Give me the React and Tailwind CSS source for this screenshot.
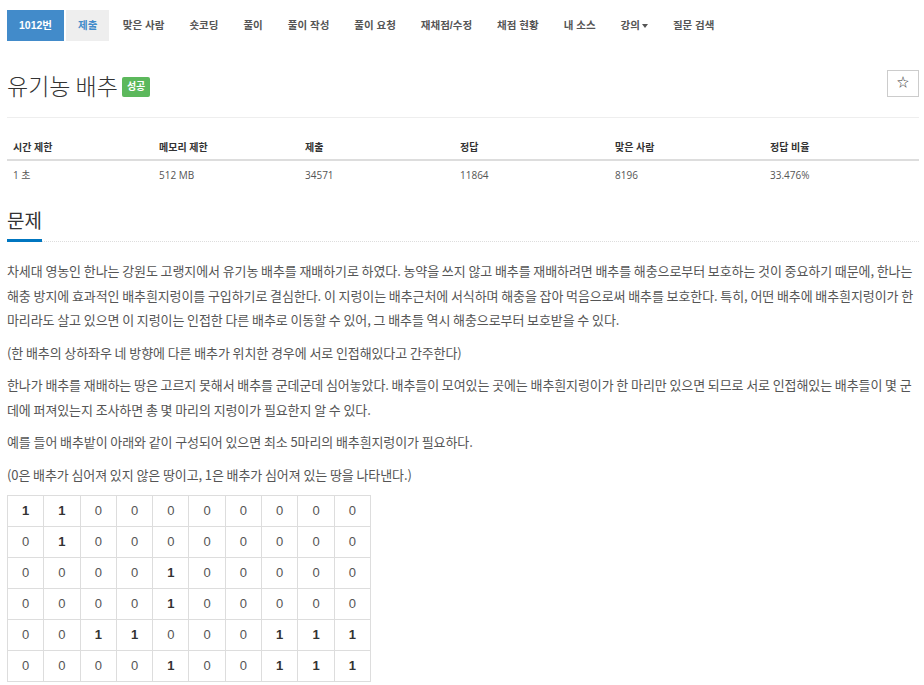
import React from "react";

const navItems = ["맞은 사람", "숏코딩", "풀이", "풀이 작성", "풀이 요청", "재채점/수정", "채점 현황", "내 소스"];

const stats = [
  ["시간 제한", "1 초", "w-[146px]"],
  ["메모리 제한", "512 MB", "w-[146px]"],
  ["제출", "34571", "w-[155px]"],
  ["정답", "11864", "w-[155px]"],
  ["맞은 사람", "8196", "w-[155px]"],
  ["정답 비율", "33.476%", ""],
];

const grid = [
  [1, 1, 0, 0, 0, 0, 0, 0, 0, 0],
  [0, 1, 0, 0, 0, 0, 0, 0, 0, 0],
  [0, 0, 0, 0, 1, 0, 0, 0, 0, 0],
  [0, 0, 0, 0, 1, 0, 0, 0, 0, 0],
  [0, 0, 1, 1, 0, 0, 0, 1, 1, 1],
  [0, 0, 0, 0, 1, 0, 0, 1, 1, 1],
];

const App = () => {
  return (
    <div className="min-h-[685px] bg-white pl-[7px] pr-[5px] pt-[10px] font-['Liberation_Sans','Noto_Sans_CJK_KR',sans-serif] text-[#555]">
      {/* Problem menu */}
      <ul className="flex gap-[2px] text-[10.5px] font-bold">
        <li className="flex h-[31px] items-center bg-[#428bca] px-[12px] text-white">1012번</li>
        <li className="flex h-[31px] items-center bg-[#eee] px-[12px] text-[#428bca]">제출</li>
        {navItems.map((item) => (
          <li key={item} className="flex h-[31px] items-center px-[11.5px]">
            {item}
          </li>
        ))}
        <li className="flex h-[31px] items-center px-[11.5px]">
          강의
          <span className="ml-[2px] inline-block h-0 w-0 border-x-[3px] border-t-[4px] border-x-transparent border-t-[#555]" />
        </li>
        <li className="flex h-[31px] items-center px-[11.5px]">질문 검색</li>
      </ul>

      {/* Title */}
      <div className="mt-[27px] flex items-center justify-between border-b border-[#eee] pb-[15px]">
        <div className="flex items-center gap-[4px]">
          <h1 className="font-['Noto_Sans_CJK_KR',sans-serif] text-[23px] font-light leading-[34px] text-[#333]">유기농 배추</h1>
          <span className="mt-[4px] rounded-[2px] bg-[#5cb85c] px-[5px] py-[2px] text-[10px] font-bold leading-[16px] text-white">성공</span>
        </div>
        <button className="mb-[4px] flex h-[27px] w-[32px] items-center justify-center border border-[#ccc] bg-white text-[12px] text-[#333]">
          ☆
        </button>
      </div>

      {/* Stats table */}
      <table className="mt-[19px] w-full table-fixed font-['Open_Sans','Noto_Sans_CJK_KR',sans-serif] text-[10px] text-[#333]">
        <thead>
          <tr className="border-b-2 border-[#ddd]">
            {stats.map(([h, , w]) => (
              <th key={h} className={`px-[6px] pb-[4px] pt-[3px] text-left font-bold ${w}`}>
                {h}
              </th>
            ))}
          </tr>
        </thead>
        <tbody>
          <tr>
            {stats.map(([h, v]) => (
              <td key={h} className="px-[6px] pb-[4px] pt-[7px] text-[#555]">
                {v}
              </td>
            ))}
          </tr>
        </tbody>
      </table>

      {/* Problem section */}
      <div className="mt-[20px] flex items-end border-b border-dotted border-[#ddd]">
        <h2 className="-mb-px border-b-[3px] border-[#0076c0] pb-[6px] font-['Noto_Sans_CJK_KR',sans-serif] text-[19px] leading-[26px] text-[#333]">
          문제
        </h2>
      </div>

      <div className="mt-[17px] font-['Noto_Sans_CJK_KR',sans-serif] text-[13px] leading-[24.5px] tracking-[-0.1px] text-[#555]">
        <p className="mb-[8px]">
          차세대 영농인 한나는 강원도 고랭지에서 유기농 배추를 재배하기로 하였다. 농약을 쓰지 않고 배추를 재배하려면 배추를 해충으로부터 보호하는 것이 중요하기 때문에, 한나는 해충 방지에 효과적인 배추흰지렁이를 구입하기로 결심한다. 이 지렁이는 배추근처에 서식하며 해충을 잡아 먹음으로써 배추를 보호한다. 특히, 어떤 배추에 배추흰지렁이가 한 마리라도 살고 있으면 이 지렁이는 인접한 다른 배추로 이동할 수 있어, 그 배추들 역시 해충으로부터 보호받을 수 있다.
        </p>
        <p className="mb-[8px]">(한 배추의 상하좌우 네 방향에 다른 배추가 위치한 경우에 서로 인접해있다고 간주한다)</p>
        <p className="mb-[8px]">
          한나가 배추를 재배하는 땅은 고르지 못해서 배추를 군데군데 심어놓았다. 배추들이 모여있는 곳에는 배추흰지렁이가 한 마리만 있으면 되므로 서로 인접해있는 배추들이 몇 군데에 퍼져있는지 조사하면 총 몇 마리의 지렁이가 필요한지 알 수 있다.
        </p>
        <p className="mb-[8px]">예를 들어 배추밭이 아래와 같이 구성되어 있으면 최소 5마리의 배추흰지렁이가 필요하다.</p>
        <p className="mb-[8px]">(0은 배추가 심어져 있지 않은 땅이고, 1은 배추가 심어져 있는 땅을 나타낸다.)</p>
      </div>

      <table className="w-[364px] table-fixed border-collapse font-['Liberation_Sans',sans-serif] text-[13px] text-[#555]">
        <tbody>
          {grid.map((row, r) => (
            <tr key={r}>
              {row.map((v, c) => (
                <td
                  key={c}
                  className={`h-[31px] border border-[#ddd] text-center ${v ? "font-bold text-[#333]" : ""}`}
                >
                  {v}
                </td>
              ))}
            </tr>
          ))}
        </tbody>
      </table>
    </div>
  );
};

export default App;
